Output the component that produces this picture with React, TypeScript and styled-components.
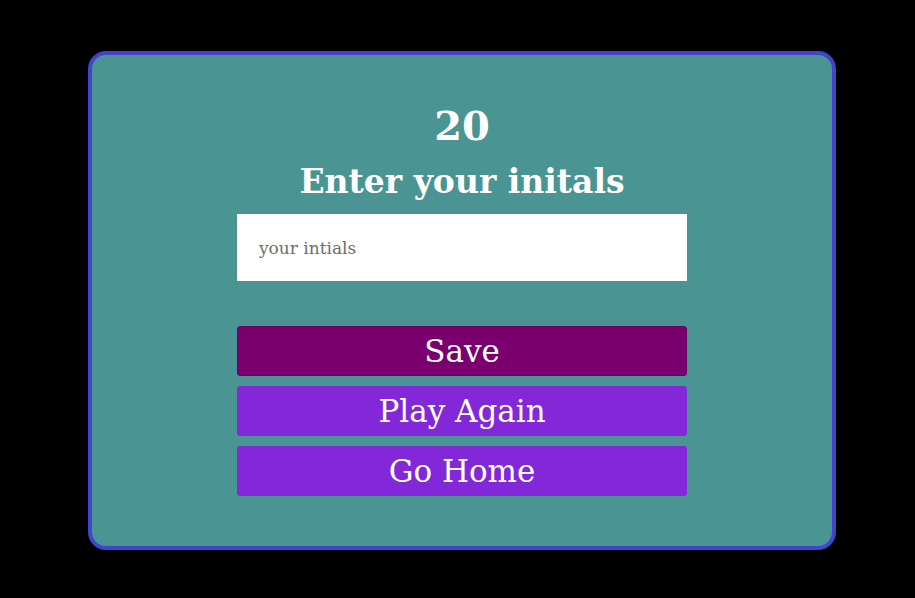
import React from "react";
import styled, { createGlobalStyle } from "styled-components";

const Global = createGlobalStyle`
  html, body { margin: 0; padding: 0; background: #000; }
  body { font-family: "DejaVu Serif", "Liberation Serif", serif; }
`;

const Page = styled.div`
  width: 915px;
  height: 598px;
  background: #000;
  padding: 51px 0 0 88px;
  box-sizing: border-box;
`;

const Card = styled.div`
  width: 748px;
  height: 499px;
  box-sizing: border-box;
  background: #4b9494;
  border: 4px solid #4343cb;
  border-radius: 18px;
  display: flex;
  flex-direction: column;
  align-items: center;
  padding-top: 47px;
`;

const Score = styled.h1`
  margin: 0;
  font-size: 40px;
  line-height: 48px;
  font-weight: 700;
  color: #fff;
`;

const Title = styled.h2`
  margin: 12px 0 0;
  font-size: 33px;
  line-height: 40px;
  font-weight: 700;
  color: #fff;
`;

const Input = styled.input`
  margin-top: 12px;
  width: 450px;
  height: 67px;
  box-sizing: border-box;
  border: none;
  outline: none;
  background: #fff;
  padding: 0 22px;
  font-family: "DejaVu Serif", "Liberation Serif", serif;
  font-size: 17px;
  color: #333;
  &::placeholder { color: #6e6e6e; }
`;

const Buttons = styled.div`
  margin-top: 45px;
  display: flex;
  flex-direction: column;
  gap: 10px;
`;

const Button = styled.button<{ $primary?: boolean }>`
  width: 450px;
  height: 50px;
  border: 1px solid ${(p) => (p.$primary ? "#6a0062" : "#8228d9")};
  border-radius: 3px;
  background: ${(p) => (p.$primary ? "#7a006f" : "#8228d9")};
  color: #fff;
  font-family: "DejaVu Serif", "Liberation Serif", serif;
  font-size: 31px;
  line-height: 1;
  padding: 0;
  cursor: pointer;
`;

export default function App() {
  return (
    <>
      <Global />
      <Page>
        <Card>
          <Score>20</Score>
          <Title>Enter your initals</Title>
          <Input placeholder="your intials" />
          <Buttons>
            <Button $primary>Save</Button>
            <Button>Play Again</Button>
            <Button>Go Home</Button>
          </Buttons>
        </Card>
      </Page>
    </>
  );
}
